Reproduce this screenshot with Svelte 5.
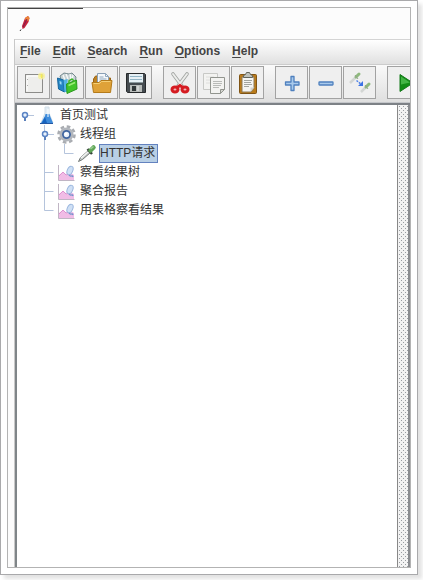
<script>
  const menus = ['File', 'Edit', 'Search', 'Run', 'Options', 'Help'];

  const groups = [
    [
      { id: 'new', label: 'New' },
      { id: 'templates', label: 'Templates' },
      { id: 'open', label: 'Open' },
      { id: 'save', label: 'Save' }
    ],
    [
      { id: 'cut', label: 'Cut' },
      { id: 'copy', label: 'Copy' },
      { id: 'paste', label: 'Paste' }
    ],
    [
      { id: 'expand', label: 'Expand all' },
      { id: 'collapse', label: 'Collapse all' },
      { id: 'toggle', label: 'Toggle' }
    ],
    [{ id: 'start', label: 'Start' }]
  ];

  // guides: one cell per ancestor level; join: how the row meets its parent line
  const rows = [
    { id: 1, name: '首页测试', icon: 'flask', guides: [], join: 'root' },
    { id: 2, name: '线程组', icon: 'gear', guides: [false], join: 'open' },
    { id: 3, name: 'HTTP请求', icon: 'dropper', guides: [false, true], join: 'last' },
    { id: 4, name: '察看结果树', icon: 'chart', guides: [false], join: 'mid' },
    { id: 5, name: '聚合报告', icon: 'chart', guides: [false], join: 'mid' },
    { id: 6, name: '用表格察看结果', icon: 'chart', guides: [false], join: 'last' }
  ];

  let selected = $state(3);
</script>

{#snippet toolIcon(id)}
  <svg class="tool-icon" viewBox="0 0 24 24" aria-hidden="true">
    {#if id === 'new'}
      <rect x="3.500" y="3.500" width="17" height="18" fill="#eeeeec" stroke="#8c8c8a" />
      <path d="M5 20V5h14" fill="none" stroke="#fff" />
      <path d="M5.500 8v1M5.500 14v1" stroke="#aaa" />
      <circle cx="19.500" cy="5" r="3.600" fill="#f8f19a" opacity=".8" />
      <path d="M19.500 3v4M17.500 5h4" stroke="#f3ea5a" />
    {:else if id === 'templates'}
      <path d="M4 5l4-3 5 1 3-1 4 4-1 8-12 2z" fill="#c6d1d3" stroke="#75898e" />
      <path d="M7 4l2 5M10 3l2 5M14 3l1 5M17 4l-1 5" stroke="#f7f9f9" stroke-width="1.400" />
      <path d="M1.500 7l6 2 1 12-6-3z" fill="#2385c4" stroke="#15649d" />
      <path d="M7.500 9l4-1v13l-3 0z" fill="#52b5e3" />
      <path d="M3.500 10l2 .7v3l-1.700-.6z" fill="#9edcf5" />
      <path d="M10.500 13l10-4 .5 9-10 4.500z" fill="#42c529" stroke="#2a9a1d" />
      <path d="M13 13v-3l3-2 2 2" fill="none" stroke="#3cb827" stroke-width="1.500" />
      <path d="M12.500 14.500l6.500-3" stroke="#9cec77" stroke-width="1.500" />
    {:else if id === 'open'}
      <path d="M3.500 8l2-3h5l2 2h8v8h-17z" fill="#bd8123" stroke="#986417" />
      <path d="M7.500 2.500h8l3 3v8h-11z" fill="#f4f7fa" stroke="#8ba0b5" />
      <path d="M15.500 2.500v3h3M9.500 6h4M9.500 8h7M9.500 10h7" fill="none" stroke="#91a9bf" />
      <path d="M2 11.500h7l2-2h11l-1.500 12h-17z" fill="#dfa238" stroke="#b47b1b" />
      <path d="M3.500 12.500h6l2-2h9" fill="none" stroke="#f5cf74" />
    {:else if id === 'save'}
      <path d="M2.500 2.500h18l1 1v18h-18l-1-1z" fill="#454b50" stroke="#272a2c" />
      <rect x="5" y="3" width="14" height="9" fill="#e6f0f5" />
      <path d="M6 5.500h12M6 8.500h12" stroke="#91b4c5" />
      <path d="M5 11.500h14" stroke="#8c9a9e" />
      <rect x="6" y="14" width="12" height="7" fill="#b7bbb9" />
      <rect x="8" y="15" width="4" height="5" fill="#303638" />
      <path d="M14 15v5" stroke="#eee" />
    {:else if id === 'cut'}
      <path d="M5 3l9 12M19 3l-9 12" stroke="#a0a3a0" stroke-width="3.600" stroke-linecap="round" />
      <path d="M5 3l9 12M19 3l-9 12" stroke="#ecedeb" stroke-width="2" stroke-linecap="round" />
      <ellipse cx="7" cy="18.500" rx="3" ry="2.600" fill="#f3b5b5" stroke="#d51c22" stroke-width="3" />
      <ellipse cx="17" cy="18.500" rx="3" ry="2.600" fill="#f3b5b5" stroke="#d51c22" stroke-width="3" />
      <path d="M9 16.500l3-2 3 2" fill="none" stroke="#d51c22" stroke-width="3" />
    {:else if id === 'copy'}
      <path d="M1.500 2.500h14v16h-14z" fill="#f3f3f1" stroke="#c8c9c6" />
      <path d="M4 6h8M4 9h5M4 12h4" stroke="#dededc" />
      <path d="M8.500 6.500h14v12l-4 4h-10z" fill="#f3f3f1" stroke="#92958f" />
      <path d="M11 10.500h9M11 12.500h9M11 14.500h8M11 16.500h6" stroke="#b9bbb8" />
      <path d="M18.500 22.500v-4h4z" fill="#d4d5d0" stroke="#92958f" />
    {:else if id === 'paste'}
      <rect x="3.500" y="3.500" width="17" height="19" rx="1" fill="#b97a19" stroke="#805414" />
      <path d="M6 6h12v11l-3 4H6z" fill="#f5f5f3" stroke="#8e7b58" />
      <path d="M8 9.500h8M8 11.500h7M8 13.500h8M8 15.500h5" stroke="#a3a5a0" />
      <path d="M14.500 20.500v-4h4z" fill="#d1d2cd" />
      <path d="M7.500 6.500v-2l2-1 1-2h3l1 2 2 1v2z" fill="#bfc2bb" stroke="#62655c" />
    {:else if id === 'expand'}
      <path d="M11 5.500h3v5.500h5v3h-5v5.500h-3V14H5.500v-3H11z" fill="#a9caec" stroke="#4f80be" stroke-width="1.300" stroke-linejoin="round" />
    {:else if id === 'collapse'}
      <rect x="5" y="11" width="14" height="3" rx=".5" fill="#a9caec" stroke="#4f80be" stroke-width="1.300" />
    {:else if id === 'toggle'}
      <path d="M2 12l6-6M13 21l5-5" stroke="#d3d6d4" stroke-width="2.500" />
      <path d="M8 6l3-3M18 16l3-3" stroke="#8fb97d" stroke-width="3" stroke-linecap="round" />
      <path d="M7 4l3 4M17 14l3 4" stroke="#93a68c" />
      <path d="M8.500 9.500l5 4" stroke="#4e82e8" stroke-width="1.500" stroke-dasharray="2 1" />
      <path d="M15 10v5h-5z" fill="#3b73e5" />
    {:else if id === 'start'}
      <path d="M8 3.500v17l13-8.500z" fill="#128c16" stroke="#157a1a" />
      <path d="M9 5.500v8l9-2z" fill="#43b545" />
    {/if}
  </svg>
{/snippet}

{#snippet nodeIcon(id)}
  <svg class="node-icon" viewBox="0 0 20 19" aria-hidden="true">
    {#if id === 'flask'}
      <path d="M8 1h4v6l4 10H4L8 7z" fill="#e2edf6" stroke="#d3dfe8" />
      <path d="M8.500 8L8 10l-4 7h12l-3-7-.5-2z" fill="#3d8bdb" />
      <path d="M8 11l-3 6h5z" fill="#1764c0" />
      <path d="M11 3v8" stroke="#fff" />
      <path d="M3 17.500h13" stroke="#2358a4" />
    {:else if id === 'gear'}
      <circle cx="9.500" cy="9.500" r="8" fill="none" stroke="#a9acb1" stroke-width="2.600" stroke-dasharray="3.600 2.683" />
      <circle cx="9.500" cy="9.500" r="5.800" fill="#cdd2d8" stroke="#b2b6bc" stroke-width="2.400" />
      <circle cx="9.500" cy="9.500" r="3.600" fill="#e8f0fa" stroke="#3f649f" stroke-width="1.800" />
      <circle cx="9" cy="9" r="1.500" fill="#fff" />
    {:else if id === 'dropper'}
      <path d="M1.500 17.500l2-4 8-7 2 2-8 7z" fill="#c5cbc8" stroke="#737977" />
      <path d="M4 14l7-6" stroke="#f4f5f4" stroke-width="1.500" />
      <path d="M10.500 5l4.500 5" stroke="#344337" stroke-width="2.500" />
      <path d="M13.500 6.500l3-3" stroke="#5fa557" stroke-width="4.500" stroke-linecap="round" />
      <path d="M13.500 5l3-2.500" stroke="#9bcf92" stroke-width="1.500" />
    {:else if id === 'chart'}
      <path d="M1.500 2v15.500h16" fill="none" stroke="#c0b5c4" />
      <path d="M2 17v-5l4-3 4 3 4-2 3 2v5z" fill="#f1bce6" />
      <path d="M2 13l4-4 3 3 3-1" fill="none" stroke="#dd92d0" />
      <ellipse cx="13" cy="7.500" rx="2.700" ry="4.500" transform="rotate(24 13 7.500)" fill="#cfe0f5" stroke="#9ab6de" />
      <path d="M12 12c2 3 3-1 4 2" fill="none" stroke="#6b91cc" stroke-width="1.300" />
    {/if}
  </svg>
{/snippet}

<div class="page">
  <main class="frame">
    <div class="window">
      <header class="titlebar">
        <svg class="logo" viewBox="0 0 12 18" aria-hidden="true">
          <path d="M6 3l3-2 1.500 2-1 4-4 6-2 1-.5-3z" fill="#c5243b" />
          <path d="M6 3l3-2 1.500 2-1 3-3-1z" fill="#ec8636" />
          <path d="M8 4L4 12" stroke="#7e1b50" />
          <path d="M2 14.500L1 16" stroke="#333" />
        </svg>
      </header>
      <div class="content">
        <nav class="menubar" aria-label="Menu">
          {#each menus as menu}
            <button type="button"><u>{menu[0]}</u>{menu.slice(1)}</button>
          {/each}
        </nav>
        <div class="toolbar" role="toolbar" aria-label="Tools">
          {#each groups as group}
            <div class="group">
              {#each group as tool}
                <button type="button" aria-label={tool.label}>{@render toolIcon(tool.id)}</button>
              {/each}
            </div>
          {/each}
        </div>
        <div class="panes">
          <ul class="tree">
            {#each rows as row (row.id)}
              <li>
                {#each row.guides as line}
                  <span class="guide" class:line></span>
                {/each}
                <svg class="join" viewBox="0 0 18 19" aria-hidden="true">
                  {#if row.join === 'root' || row.join === 'open'}
                    <path d="M9 9.500h6" stroke="#b5c4dc" />
                    {#if row.join === 'open'}
                      <path d="M5.500 0v19" stroke="#b5c4dc" />
                    {/if}
                    <path d="M6 11v4" stroke="#5b80ba" stroke-width="2" />
                    <circle cx="6" cy="9" r="2.500" fill="#e8f1fb" stroke="#5b84c5" stroke-width="1.500" />
                  {:else}
                    <path d={row.join === 'mid' ? 'M5.500 0v19M5.500 9.500h9' : 'M5.500 0v9.500h9'} fill="none" stroke="#b5c4dc" />
                  {/if}
                </svg>
                {@render nodeIcon(row.icon)}
                <button
                  type="button"
                  class="label"
                  class:selected={selected === row.id}
                  onclick={() => (selected = row.id)}>{row.name}</button>
              </li>
            {/each}
          </ul>
          <div class="divider"></div>
        </div>
      </div>
    </div>
  </main>
</div>

<style>
  :global(body) {
    margin: 0;
    background: #fff;
  }
  .page {
    box-sizing: border-box;
    display: flex;
    min-height: 100vh;
    padding: 0 5px 5px 0;
    overflow: hidden;
    font-family: 'Liberation Sans', 'Noto Sans CJK SC', sans-serif;
    font-size: 12px;
    color: #333;
  }
  .frame {
    box-sizing: border-box;
    display: flex;
    flex: 1;
    min-width: 0;
    padding: 6px;
    border: 1px solid #a9a9ab;
    background: #fff;
    box-shadow: 4px 4px 4px #e2e2e2;
  }
  .window {
    display: flex;
    flex: 1;
    flex-direction: column;
    min-width: 0;
    border: 1px solid #b3b3b3;
    background: #fcfcfc;
  }
  .titlebar {
    height: 31px;
    padding-left: 11px;
    background: linear-gradient(#444, #444) left top / 75px 1px no-repeat;
  }
  .logo {
    display: block;
    width: 12px;
    height: 18px;
    padding-top: 7px;
  }
  .content {
    display: flex;
    flex: 1;
    flex-direction: column;
    margin-left: 6px;
    border-left: 1px solid #c8c8c8;
    background: #eee;
    overflow: hidden;
  }
  button {
    margin: 0;
    padding: 0;
    border: 0;
    background: none;
    font: inherit;
    color: inherit;
  }
  .menubar {
    display: flex;
    align-items: center;
    gap: 12px;
    box-sizing: border-box;
    height: 26px;
    padding: 0 0 2px 5px;
    border-top: 1px solid #d4d4d4;
    border-bottom: 1px solid #ccc;
    background: linear-gradient(#fff, #e0e0e0);
    font-weight: bold;
    color: #444;
  }
  .menubar u {
    text-underline-offset: 2px;
  }
  .toolbar {
    display: flex;
    gap: 11px;
    padding: 1px 0 3px 2px;
    background: linear-gradient(#fafafa, #dfdfdf);
    border-bottom: 1px solid #c4c6ca;
  }
  .group {
    display: flex;
    gap: 1px;
  }
  .group button {
    display: grid;
    flex: none;
    place-items: center;
    box-sizing: border-box;
    width: 33px;
    height: 33px;
    border: 1px solid #a2a2a2;
    background: #efefef;
  }
  .tool-icon {
    width: 24px;
    height: 24px;
  }
  .panes {
    display: flex;
    flex: 1;
    border-top: 2px solid #7d8186;
  }
  .tree {
    flex: 1;
    margin: 0;
    padding: 1px 0 0 2px;
    border-left: 2px solid #7f8588;
    border-right: 1px solid #888;
    background: #fff;
    list-style: none;
  }
  .tree li {
    display: flex;
    align-items: center;
    height: 19px;
  }
  .guide {
    width: 20px;
    height: 19px;
  }
  .guide.line {
    background: linear-gradient(90deg, transparent 5px, #b5c4dc 5px, #b5c4dc 6px, transparent 6px);
  }
  .join {
    width: 18px;
    height: 19px;
  }
  .node-icon {
    width: 20px;
    height: 19px;
  }
  .label {
    box-sizing: border-box;
    height: 19px;
    margin-left: 2px;
    padding: 0 2px 0 0;
    border: 1px solid transparent;
    line-height: 17px;
    white-space: nowrap;
  }
  .label.selected {
    border-color: #6382bf;
    background: #b8cfe5;
  }
  /* two staggered layers of single-pixel dots form the drag grip */
  .divider {
    width: 10px;
    border-right: 2px solid #8b8d91;
    background:
      conic-gradient(from 90deg at 3px 3px, #999da2 25%, transparent 0) 0 0 / 4px 4px,
      conic-gradient(from 90deg at 3px 3px, #999da2 25%, transparent 0) 2px 2px / 4px 4px,
      #f3f3f3;
  }
</style>
